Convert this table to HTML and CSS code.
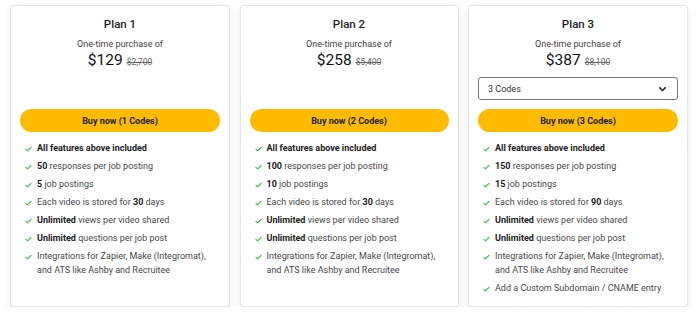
FILE: index.html
```html
<!DOCTYPE html>
<html>
<head>
<meta charset="utf-8">
<link rel="stylesheet" href="styles.css">
</head>
<body>
<div class="plans">
  <div class="card">
    <div class="title">Plan 1</div>
    <div class="sub">One-time purchase of</div>
    <div class="price"><span class="now">$129</span><span class="was">$2,700</span></div>
    <div class="select-slot"></div>
    <button class="buy">Buy now (1 Codes)</button>
    <ul class="features">
      <li><svg viewBox="0 0 10 8"><path d="M1 4.2 L3.6 6.6 L9 1.2"/></svg><span><b>All features above included</b></span></li>
      <li><svg viewBox="0 0 10 8"><path d="M1 4.2 L3.6 6.6 L9 1.2"/></svg><span><b>50</b> responses per job posting</span></li>
      <li><svg viewBox="0 0 10 8"><path d="M1 4.2 L3.6 6.6 L9 1.2"/></svg><span><b>5</b> job postings</span></li>
      <li><svg viewBox="0 0 10 8"><path d="M1 4.2 L3.6 6.6 L9 1.2"/></svg><span>Each video is stored for <b>30</b> days</span></li>
      <li><svg viewBox="0 0 10 8"><path d="M1 4.2 L3.6 6.6 L9 1.2"/></svg><span><b>Unlimited</b> views per video shared</span></li>
      <li><svg viewBox="0 0 10 8"><path d="M1 4.2 L3.6 6.6 L9 1.2"/></svg><span><b>Unlimited</b> questions per job post</span></li>
      <li><svg viewBox="0 0 10 8"><path d="M1 4.2 L3.6 6.6 L9 1.2"/></svg><span>Integrations for Zapier, Make (Integromat), and ATS like Ashby and Recruitee</span></li>
    </ul>
  </div>
  <div class="card">
    <div class="title">Plan 2</div>
    <div class="sub">One-time purchase of</div>
    <div class="price"><span class="now">$258</span><span class="was">$5,400</span></div>
    <div class="select-slot"></div>
    <button class="buy">Buy now (2 Codes)</button>
    <ul class="features">
      <li><svg viewBox="0 0 10 8"><path d="M1 4.2 L3.6 6.6 L9 1.2"/></svg><span><b>All features above included</b></span></li>
      <li><svg viewBox="0 0 10 8"><path d="M1 4.2 L3.6 6.6 L9 1.2"/></svg><span><b>100</b> responses per job posting</span></li>
      <li><svg viewBox="0 0 10 8"><path d="M1 4.2 L3.6 6.6 L9 1.2"/></svg><span><b>10</b> job postings</span></li>
      <li><svg viewBox="0 0 10 8"><path d="M1 4.2 L3.6 6.6 L9 1.2"/></svg><span>Each video is stored for <b>30</b> days</span></li>
      <li><svg viewBox="0 0 10 8"><path d="M1 4.2 L3.6 6.6 L9 1.2"/></svg><span><b>Unlimited</b> views per video shared</span></li>
      <li><svg viewBox="0 0 10 8"><path d="M1 4.2 L3.6 6.6 L9 1.2"/></svg><span><b>Unlimited</b> questions per job post</span></li>
      <li><svg viewBox="0 0 10 8"><path d="M1 4.2 L3.6 6.6 L9 1.2"/></svg><span>Integrations for Zapier, Make (Integromat), and ATS like Ashby and Recruitee</span></li>
    </ul>
  </div>
  <div class="card">
    <div class="title">Plan 3</div>
    <div class="sub">One-time purchase of</div>
    <div class="price"><span class="now">$387</span><span class="was">$8,100</span></div>
    <div class="select-slot select"><span>3 Codes</span><svg viewBox="0 0 10 6"><path d="M1.5 1.2 L5 4.6 L8.5 1.2"/></svg></div>
    <button class="buy">Buy now (3 Codes)</button>
    <ul class="features">
      <li><svg viewBox="0 0 10 8"><path d="M1 4.2 L3.6 6.6 L9 1.2"/></svg><span><b>All features above included</b></span></li>
      <li><svg viewBox="0 0 10 8"><path d="M1 4.2 L3.6 6.6 L9 1.2"/></svg><span><b>150</b> responses per job posting</span></li>
      <li><svg viewBox="0 0 10 8"><path d="M1 4.2 L3.6 6.6 L9 1.2"/></svg><span><b>15</b> job postings</span></li>
      <li><svg viewBox="0 0 10 8"><path d="M1 4.2 L3.6 6.6 L9 1.2"/></svg><span>Each video is stored for <b>90</b> days</span></li>
      <li><svg viewBox="0 0 10 8"><path d="M1 4.2 L3.6 6.6 L9 1.2"/></svg><span><b>Unlimited</b> views per video shared</span></li>
      <li><svg viewBox="0 0 10 8"><path d="M1 4.2 L3.6 6.6 L9 1.2"/></svg><span><b>Unlimited</b> questions per job post</span></li>
      <li><svg viewBox="0 0 10 8"><path d="M1 4.2 L3.6 6.6 L9 1.2"/></svg><span>Integrations for Zapier, Make (Integromat), and ATS like Ashby and Recruitee</span></li>
      <li><svg viewBox="0 0 10 8"><path d="M1 4.2 L3.6 6.6 L9 1.2"/></svg><span>Add a Custom Subdomain / CNAME entry</span></li>
    </ul>
  </div>
</div>
</body>
</html>
```

FILE: styles.css
```css
* { box-sizing: border-box; }
html, body { margin: 0; background: #ffffff; }
body {
  font-family: Roboto, "Liberation Sans", sans-serif;
  color: #222;
  padding: 5px 0 0 10px;
}
.plans {
  display: grid;
  grid-template-columns: 220px 219px 220px;
  column-gap: 9.5px;
  align-items: stretch;
}
.card {
  background: #fff;
  border: 1px solid #e6e6e8;
  border-radius: 3px;
  box-shadow: 0 3px 8px rgba(0, 0, 0, 0.08);
  padding: 10px 9px 11px;
  display: flex;
  flex-direction: column;
  min-height: 302px;
}
.title {
  text-align: center;
  font-size: 11.5px;
  line-height: 16px;
  font-weight: 500;
  color: #222;
}
.sub {
  text-align: center;
  font-size: 9px;
  line-height: 12px;
  margin-top: 6px;
  color: #444;
}
.price {
  display: flex;
  justify-content: center;
  align-items: baseline;
  gap: 4px;
  height: 20px;
  line-height: 20px;
}
.now { font-size: 15.5px; color: #111; line-height: 20px; }
.was { font-size: 8.5px; color: #666; text-decoration: line-through; line-height: 20px; }
.select-slot {
  height: 23px;
  margin-top: 7px;
  flex: none;
}
.select {
  border: 1px solid #777;
  border-radius: 3px;
  display: flex;
  align-items: center;
  justify-content: space-between;
  padding: 0 10px 0 9px;
  font-size: 9px;
  color: #333;
}
.select svg { width: 9px; height: 6px; }
.select path { fill: none; stroke: #222; stroke-width: 1.6; }
.buy {
  margin-top: 9px;
  height: 23px;
  flex: none;
  border: none;
  border-radius: 12px;
  background: #ffbb00;
  font-family: inherit;
  font-size: 9px;
  font-weight: 700;
  color: #222;
  padding: 0;
}
.features {
  list-style: none;
  margin: 9px 0 0;
  padding: 0 2px 0 5px;
  display: flex;
  flex-direction: column;
  gap: 4px;
}
.features li {
  display: flex;
  align-items: flex-start;
  gap: 5px;
  font-size: 9px;
  line-height: 14px;
  color: #4a4a4a;
}
.features li b { color: #222; font-weight: 700; }
.features svg {
  flex: none;
  width: 7px;
  height: 6px;
  margin-top: 4.5px;
}
.features path { fill: none; stroke: #1fbf3a; stroke-width: 1.5; }
```
